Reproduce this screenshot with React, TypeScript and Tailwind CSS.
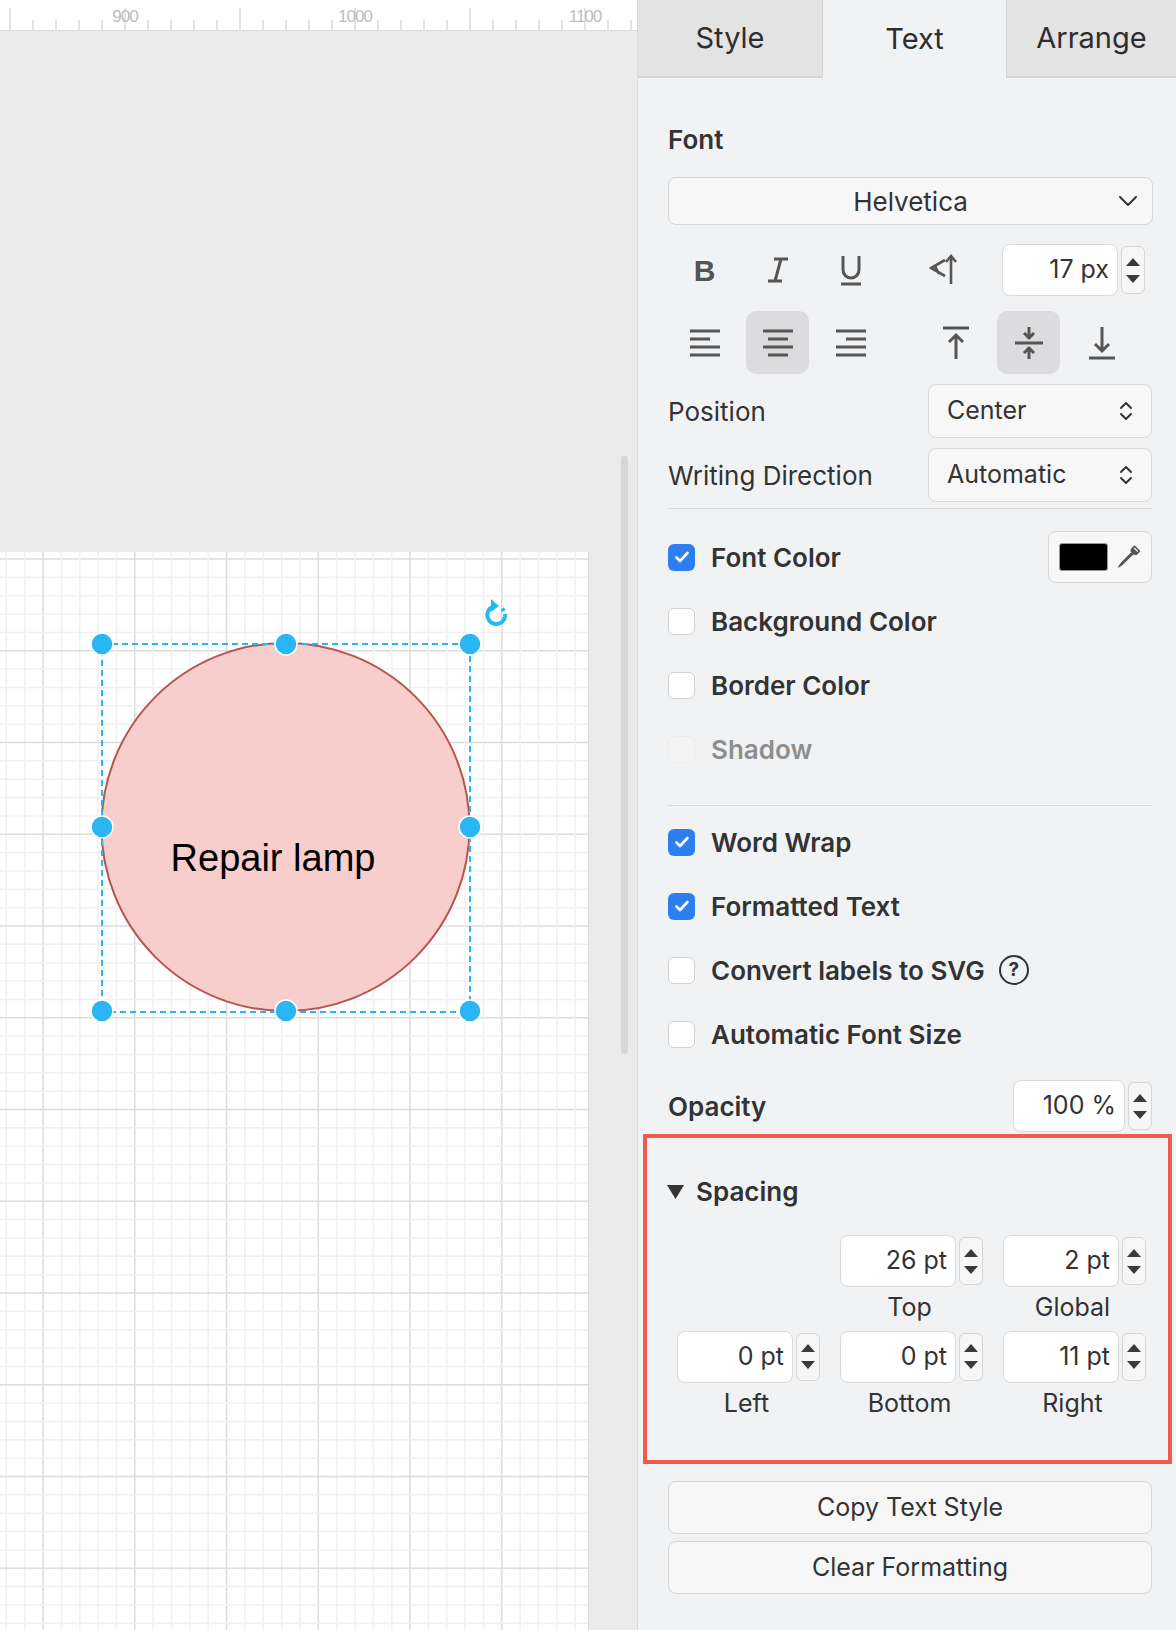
import React from "react"

const font = { fontFamily: "Inter, 'Liberation Sans', sans-serif" }

function Stepper() {
  return (
    <div className="flex h-[48px] w-[24px] flex-col items-center justify-center gap-[9px] rounded-[6px] border border-[#d6d6d6] bg-[#f6f6f6]">
      <svg width="14" height="8" viewBox="0 0 14 8"><path d="M7 0L14 8H0z" fill="#3a3a3a" /></svg>
      <svg width="14" height="8" viewBox="0 0 14 8"><path d="M7 8L0 0H14z" fill="#3a3a3a" /></svg>
    </div>
  )
}

function NumInput({ value, w = "w-[118px]" }: { value: string; w?: string }) {
  return (
    <div className="flex items-center gap-[3px]">
      <div className={`flex h-[52px] ${w} items-center justify-end rounded-[8px] border border-[#d9d9d9] bg-white pr-[8px] text-[25px] text-[#333]`}>
        {value}
      </div>
      <Stepper />
    </div>
  )
}

function Check({ checked, label, dim }: { checked?: boolean; label: string; dim?: boolean }) {
  return (
    <div className="flex h-[64px] items-center gap-[16px]">
      {checked ? (
        <div className="flex h-[27px] w-[27px] items-center justify-center rounded-[6px] bg-[#2d7ff0]">
          <svg width="18" height="18" viewBox="0 0 18 18"><path d="M3.5 9.5l3.5 3.5 7.5-8" fill="none" stroke="white" strokeWidth="2.6" strokeLinecap="round" strokeLinejoin="round" /></svg>
        </div>
      ) : (
        <div className={`h-[27px] w-[27px] rounded-[6px] border ${dim ? "border-[#ececec] bg-[#f3f3f3]" : "border-[#cfcfcf] bg-white"}`} />
      )}
      <span className={`text-[26px] font-semibold ${dim ? "text-[#8e8e8e]" : "text-[#333]"}`}>{label}</span>
    </div>
  )
}

function Select({ value, w }: { value: string; w: string }) {
  return (
    <div className={`flex h-[54px] ${w} items-center justify-between rounded-[8px] border border-[#d9d9d9] bg-[#f7f7f8] px-[18px] text-[25px] text-[#333]`}>
      <span>{value}</span>
      <svg width="14" height="22" viewBox="0 0 14 22"><path d="M2 8l5-5 5 5M2 14l5 5 5-5" fill="none" stroke="#333" strokeWidth="2" strokeLinecap="round" strokeLinejoin="round" /></svg>
    </div>
  )
}

const ic = { fill: "none", stroke: "#555", strokeWidth: 3 }

function Canvas() {
  const step = 18.35
  const lines: number[] = []
  for (let i = 0; i < 60; i++) lines.push(i)
  return (
    <svg width="637" height="1600" className="absolute left-0 top-0">
      <rect x="0" y="0" width="637" height="1600" fill="#ebebeb" />
      <rect x="0" y="521" width="588" height="1100" fill="white" />
      <g>
        {lines.map((i) => {
          const x = -12 + i * step
          const y = 521 + 7 + i * step
          const major = i % 5 === 3
          const c = major ? "#dcdcdc" : "#f0f0f0"
          return (
            <g key={i}>
              {x < 588 && <line x1={x} y1="521" x2={x} y2="1600" stroke={c} strokeWidth="1.5" />}
              <line x1="0" y1={y} x2="588" y2={y} stroke={i % 5 === 0 ? "#dcdcdc" : "#f0f0f0"} strokeWidth="1.5" />
            </g>
          )
        })}
      </g>
      <line x1="588.5" y1="521" x2="588.5" y2="1600" stroke="#d8d8d8" />
      <rect x="621" y="425" width="7" height="598" rx="3" fill="#d6d6d6" />
      <ellipse cx="285.5" cy="796" rx="184" ry="184" fill="#f8cecc" stroke="#b85450" strokeWidth="2" />
      <rect x="102" y="613" width="368" height="368" fill="none" stroke="#29b6f2" strokeWidth="2" strokeDasharray="6 4" />
      {[[102, 613], [286, 613], [470, 613], [102, 796], [470, 796], [102, 980], [286, 980], [470, 980]].map(([x, y], i) => (
        <circle key={i} cx={x} cy={y} r="11" fill="#29b6f2" stroke="white" strokeWidth="1.5" />
      ))}
      <g transform="translate(497 584)" fill="none" stroke="#29b6f2" strokeWidth="4">
        <path d="M-1 -9A9 9 0 1 0 8 2" />
        <path d="M8 2A9 9 0 0 0 4 -7" strokeDasharray="3 3" />
        <path d="M-6 -16l8 7-8 6z" fill="#29b6f2" stroke="none" />
      </g>
      <text x="273" y="840" textAnchor="middle" fontSize="38" fill="#000" fontFamily="'Liberation Sans', Arial, sans-serif">Repair lamp</text>
    </svg>
  )
}

function Ruler() {
  const ticks: number[] = []
  for (let i = 0; i < 28; i++) ticks.push(10 + i * 23)
  return (
    <svg width="637" height="31" className="block">
      <rect width="637" height="31" fill="white" />
      {ticks.map((x, i) => (
        <line key={i} x1={x} y1={i % 5 === 0 ? 8 : 20} x2={x} y2="31" stroke="#d4d4d4" strokeWidth="1.3" />
      ))}
      {[["900", 125], ["1000", 355], ["1100", 585]].map(([t, x]) => (
        <text key={t} x={Number(x)} y="22" fontSize="17" fill="#bdbdbd" textAnchor="middle" fontFamily="'Liberation Sans', sans-serif" letterSpacing="-1">{t}</text>
      ))}
      <line x1="0" y1="30.5" x2="637" y2="30.5" stroke="#dcdcdc" />
    </svg>
  )
}

export default function App() {
  return (
    <div className="flex h-[1630px] w-[1176px] overflow-hidden bg-[#f1f1f3]" style={font}>
      <div className="flex w-[637px] flex-col">
        <Ruler />
        <div className="relative flex-1 overflow-hidden">
          <Canvas />
        </div>
      </div>
      <div className="flex w-[539px] flex-col border-l border-[#dadada] bg-[#f1f2f4] text-[#333]">
        <div className="flex h-[78px] text-[29px] text-[#2e2e2e]">
          <div className="flex w-[185px] items-center justify-center border-b-2 border-r border-[#d4d4d4] bg-[#e3e3e3]">Style</div>
          <div className="flex w-[183px] items-center justify-center">Text</div>
          <div className="flex flex-1 items-center justify-center border-b-2 border-l border-[#d4d4d4] bg-[#e3e3e3]">Arrange</div>
        </div>
        <div className="flex flex-col pl-[30px] pr-[24px]">
          <div className="mt-[42px] text-[26px] font-semibold">Font</div>
          <div className="relative mt-[18px] flex h-[48px] w-[485px] items-center justify-center rounded-[8px] border border-[#d6d6d6] bg-[#f7f7f8] text-[26px]">
            Helvetica
            <svg className="absolute right-[14px]" width="20" height="12" viewBox="0 0 20 12"><path d="M2 2l8 8 8-8" fill="none" stroke="#333" strokeWidth="2" strokeLinecap="round" strokeLinejoin="round" /></svg>
          </div>
          <div className="mt-[19px] flex items-center">
            <div className="flex w-[73px] justify-center text-[30px] font-bold text-[#555]" style={{ fontFamily: "'Liberation Sans', sans-serif" }}>B</div>
            <div className="flex w-[73px] justify-center">
              <svg width="24" height="28" viewBox="0 0 24 28"><path d="M8 3h14M2 25h14M15 3L9 25" {...ic} /></svg>
            </div>
            <div className="flex w-[73px] flex-col items-center">
              <svg width="26" height="32" viewBox="0 0 26 32"><path d="M5 2v14a8 8 0 0 0 16 0V2M3 30h20" {...ic} /></svg>
            </div>
            <div className="ml-[22px] flex w-[73px] justify-center">
              <svg width="34" height="32" viewBox="0 0 34 32"><path d="M16 6L2 14l14 8M6 12l4 8M22 30V3M17 8l5-6 5 6" {...ic} strokeWidth={2.6} /></svg>
            </div>
            <div className="ml-[20px]"><NumInput value="17 px" w="w-[116px]" /></div>
          </div>
          <div className="mt-[15px] flex items-center">
            {[0, 1, 2].map((k) => (
              <div key={k} className={`flex h-[63px] w-[63px] items-center justify-center rounded-[10px] ${k === 1 ? "bg-[#dcdcde]" : ""} ${k ? "ml-[10px]" : "ml-[5px]"}`}>
                <svg width="32" height="32" viewBox="0 0 32 32">
                  {k === 0 && <path d="M1 4h30M1 12h20M1 20h30M1 28h30" {...ic} />}
                  {k === 1 && <path d="M1 4h30M6 12h20M1 20h30M6 28h20" {...ic} />}
                  {k === 2 && <path d="M1 4h30M11 12h20M1 20h30M1 28h30" {...ic} />}
                </svg>
              </div>
            ))}
            {[0, 1, 2].map((k) => (
              <div key={k} className={`flex h-[63px] w-[63px] items-center justify-center rounded-[10px] ${k === 1 ? "bg-[#dcdcde]" : ""} ${k ? "ml-[10px]" : "ml-[42px]"}`}>
                <svg width="32" height="36" viewBox="0 0 32 36">
                  {k === 0 && <path d="M3 3h26M16 34V10M9 17l7-7 7 7" {...ic} />}
                  {k === 1 && <path d="M2 18h28M16 2v11M11 8l5 5 5-5M16 34V23M11 28l5-5 5 5" {...ic} />}
                  {k === 2 && <path d="M3 33h26M16 2v24M9 19l7 7 7-7" {...ic} />}
                </svg>
              </div>
            ))}
          </div>
          <div className="mt-[10px] flex items-center justify-between">
            <span className="text-[26px]">Position</span>
            <Select value="Center" w="w-[224px]" />
          </div>
          <div className="mt-[10px] flex items-center justify-between">
            <span className="text-[26px]">Writing Direction</span>
            <Select value="Automatic" w="w-[224px]" />
          </div>
          <div className="mt-[6px] h-px bg-[#dadada]" />
          <div className="mt-[16px] flex items-center justify-between">
            <Check checked label="Font Color" />
            <div className="flex h-[52px] w-[104px] items-center gap-[8px] rounded-[8px] border border-[#d6d6d6] bg-[#f7f7f8] px-[10px]">
              <div className="h-[28px] w-[50px] rounded-[3px] border border-[#999] bg-black" />
              <svg width="26" height="26" viewBox="0 0 26 26"><path d="M17 4l5 5M15 6l5 5M18 9L7 20l-4 3 3-4L17 8M19 2l5 5-3 3-5-5z" fill="none" stroke="#555" strokeWidth="1.6" strokeLinejoin="round" /></svg>
            </div>
          </div>
          <Check label="Background Color" />
          <Check label="Border Color" />
          <Check label="Shadow" dim />
          <div className="mt-[24px] h-px bg-[#dadada]" />
          <div className="mt-[4px]">
            <Check checked label="Word Wrap" />
            <Check checked label="Formatted Text" />
            <div className="flex items-center gap-[14px]">
              <Check label="Convert labels to SVG" />
              <div className="flex h-[30px] w-[30px] items-center justify-center rounded-full border-[2.5px] border-[#333] text-[19px] font-bold">?</div>
            </div>
            <Check label="Automatic Font Size" />
          </div>
          <div className="mt-[14px] flex items-center justify-between">
            <span className="text-[26px] font-semibold">Opacity</span>
            <NumInput value="100 %" w="w-[112px]" />
          </div>
        </div>
        <div className="ml-[5px] mr-[4px] mt-[2px] h-[330px] border-[4px] border-[#f25a4e] pl-[20px]">
          <div className="mt-[34px] flex items-center gap-[12px]">
            <svg width="17" height="14" viewBox="0 0 17 14"><path d="M0 0h17L8.5 14z" fill="#333" /></svg>
            <span className="text-[26px] font-semibold">Spacing</span>
          </div>
          <div className="mt-[24px] grid grid-cols-[163px_163px_163px] gap-y-[4px]">
            {[["", ""], ["26 pt", "Top"], ["2 pt", "Global"], ["0 pt", "Left"], ["0 pt", "Bottom"], ["11 pt", "Right"]].map(([v, l], i) => (
              <div key={i} className="flex flex-col items-center">
                {v ? (
                  <>
                    <NumInput value={v} w="w-[116px]" />
                    <span className="mr-[4px] mt-[2px] text-[25px]">{l}</span>
                  </>
                ) : null}
              </div>
            ))}
          </div>
        </div>
        <div className="ml-[30px] mr-[24px] mt-[17px] flex flex-col gap-[7px]">
          <div className="flex h-[53px] items-center justify-center rounded-[8px] border border-[#d6d6d6] bg-[#f7f7f8] text-[25px]">Copy Text Style</div>
          <div className="flex h-[53px] items-center justify-center rounded-[8px] border border-[#d6d6d6] bg-[#f7f7f8] text-[25px]">Clear Formatting</div>
        </div>
      </div>
    </div>
  )
}
